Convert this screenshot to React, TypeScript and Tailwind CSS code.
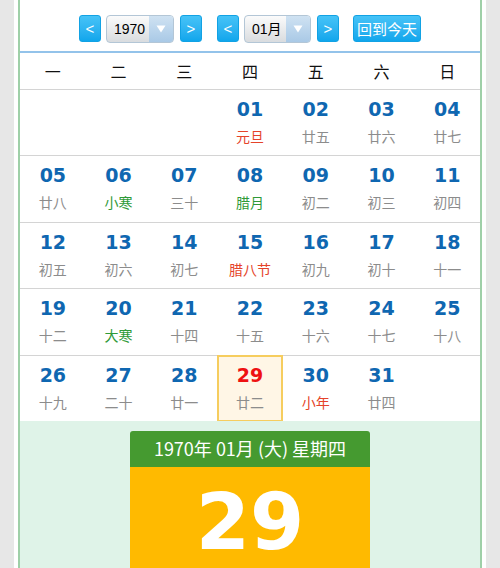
type Day = { d: string; l: string; c?: "red" | "green"; sel?: boolean } | null;

const weeks: Day[][] = [
  [null, null, null, { d: "01", l: "元旦", c: "red" }, { d: "02", l: "廿五" }, { d: "03", l: "廿六" }, { d: "04", l: "廿七" }],
  [
    { d: "05", l: "廿八" },
    { d: "06", l: "小寒", c: "green" },
    { d: "07", l: "三十" },
    { d: "08", l: "腊月", c: "green" },
    { d: "09", l: "初二" },
    { d: "10", l: "初三" },
    { d: "11", l: "初四" },
  ],
  [
    { d: "12", l: "初五" },
    { d: "13", l: "初六" },
    { d: "14", l: "初七" },
    { d: "15", l: "腊八节", c: "red" },
    { d: "16", l: "初九" },
    { d: "17", l: "初十" },
    { d: "18", l: "十一" },
  ],
  [
    { d: "19", l: "十二" },
    { d: "20", l: "大寒", c: "green" },
    { d: "21", l: "十四" },
    { d: "22", l: "十五" },
    { d: "23", l: "十六" },
    { d: "24", l: "十七" },
    { d: "25", l: "十八" },
  ],
  [
    { d: "26", l: "十九" },
    { d: "27", l: "二十" },
    { d: "28", l: "廿一" },
    { d: "29", l: "廿二", sel: true },
    { d: "30", l: "小年", c: "red" },
    { d: "31", l: "廿四" },
    null,
  ],
];

const weekdays = ["一", "二", "三", "四", "五", "六", "日"];

function NavBtn({ children, className = "" }: { children: React.ReactNode; className?: string }) {
  return (
    <button
      className={
        "h-[27px] rounded-[3px] bg-gradient-to-b from-[#45c3f7] to-[#0ea6ec] text-white text-[15px] leading-none flex items-center justify-center border border-[#12a2e4] " +
        className
      }
      style={{ fontFamily: '"Liberation Sans", "Noto Sans CJK SC", sans-serif' }}
    >
      {children}
    </button>
  );
}

function Select({ value, w }: { value: string; w: string }) {
  return (
    <div
      className={
        "h-[28px] rounded-[4px] border border-[#b3c6d6] bg-gradient-to-b from-[#fbfbfb] to-[#d9dcdf] flex items-stretch overflow-hidden " +
        w
      }
    >
      <div
        className="flex-1 flex items-center pl-[7px] text-[14px] text-black"
        style={{ fontFamily: '"Liberation Sans", "Noto Sans CJK SC", sans-serif' }}
      >
        {value}
      </div>
      <div className="w-[24px] bg-gradient-to-b from-[#cfe2f2] to-[#a9c9e6] flex items-center justify-center">
        <svg width="10" height="8" viewBox="0 0 10 8">
          <path d="M0.5 0.5 L9.5 0.5 L5 7.5 Z" fill="#ffffff" />
        </svg>
      </div>
    </div>
  );
}

export default function App() {
  const cjk = '"Noto Sans CJK SC", sans-serif';
  const num = '"DejaVu Sans", "Noto Sans CJK SC", sans-serif';
  return (
    <div className="h-[568px] overflow-hidden bg-[#e7e7e7]">
      <div className="mx-auto w-[472px] h-full bg-white px-[4px]">
        <div className="h-full border-x-2 border-[#9fd0a8] flex flex-col">
          {/* nav */}
          <div className="shrink-0 h-[53px] pt-[15px] flex items-start justify-center border-b-2 border-[#93c3ea]">
            <NavBtn className="w-[22px]">&lt;</NavBtn>
            <div className="ml-[5px]">
              <Select value="1970" w="w-[68px]" />
            </div>
            <NavBtn className="w-[22px] ml-[6px]">&gt;</NavBtn>
            <NavBtn className="w-[22px] ml-[15px]">&lt;</NavBtn>
            <div className="ml-[5px]">
              <Select value="01月" w="w-[67px]" />
            </div>
            <NavBtn className="w-[22px] ml-[6px]">&gt;</NavBtn>
            <NavBtn className="w-[68px] ml-[14px] text-[15px]">
              <span style={{ fontFamily: cjk }}>回到今天</span>
            </NavBtn>
          </div>

          {/* weekdays */}
          <div className="shrink-0 grid grid-cols-7 h-[36px] items-center text-[16px] text-[#111]" style={{ fontFamily: cjk }}>
            {weekdays.map((w) => (
              <div key={w} className="text-center">
                {w}
              </div>
            ))}
          </div>

          {/* days */}
          {weeks.map((row, i) => (
            <div key={i} className="shrink-0 grid grid-cols-7 h-[66.4px] border-t border-[#d4d4d4]">
              {row.map((day, j) =>
                day ? (
                  <div
                    key={j}
                    className={
                      "flex flex-col items-center " +
                      (day.sel ? "border-2 border-[#f6cd5e] bg-[#fff6e6] pt-[7px] -mt-px h-[67.4px]" : "pt-[8px]")
                    }
                  >
                    <div
                      className={"text-[19px] leading-[22px] font-bold " + (day.sel ? "text-[#ee1111]" : "text-[#0f67b1]")}
                      style={{ fontFamily: num }}
                    >
                      {day.d}
                    </div>
                    <div
                      className={
                        "mt-[6px] text-[14px] leading-[20px] " +
                        (day.c === "red" ? "text-[#e5432a]" : day.c === "green" ? "text-[#2f9a38]" : "text-[#8c8c8c]")
                      }
                      style={{ fontFamily: cjk }}
                    >
                      {day.l}
                    </div>
                  </div>
                ) : (
                  <div key={j} />
                )
              )}
            </div>
          ))}

          {/* today card */}
          <div className="flex-1 bg-[#dff3e8] pt-[10px]">
            <div className="mx-auto w-[240px]">
              <div
                className="h-[36px] rounded-t-[3px] bg-[#459a30] text-white text-[18px] flex items-center justify-center"
                style={{ fontFamily: cjk }}
              >
                1970年 01月 (大) 星期四
              </div>
              <div className="h-[101px] bg-[#ffba00] flex justify-center pt-[15px]">
                <span className="text-white font-bold text-[78px] leading-[80px]" style={{ fontFamily: num }}>
                  29
                </span>
              </div>
            </div>
          </div>
        </div>
      </div>
    </div>
  );
}
